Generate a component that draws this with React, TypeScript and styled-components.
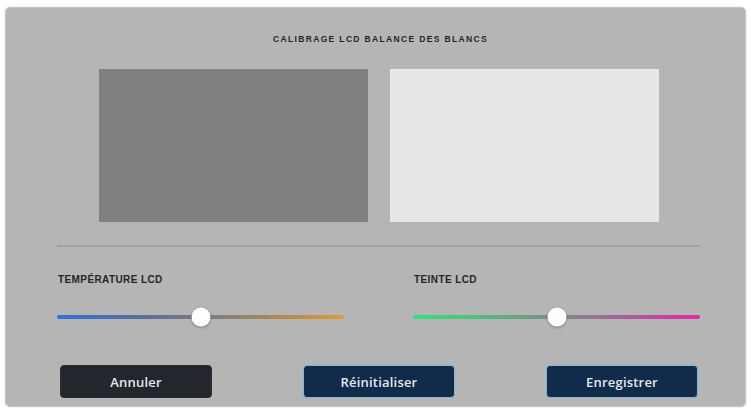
import React from 'react';
import styled, { createGlobalStyle } from 'styled-components';

const GlobalStyle = createGlobalStyle`
  html, body {
    margin: 0;
    padding: 0;
    background: #ffffff;
  }
  body {
    font-family: "Open Sans", "Liberation Sans", sans-serif;
  }
`;

const Page = styled.div`
  width: 751px;
  height: 412px;
  padding: 7px 5px 5px 5px;
  box-sizing: border-box;
`;

const Panel = styled.div`
  width: 741px;
  height: 400px;
  box-sizing: border-box;
  background: #b5b5b5;
  border: 1px solid #c4c4c4;
  border-radius: 5px;
  box-shadow: 0 0 2px rgba(0, 0, 0, 0.15);
  padding: 26px 45px 0 51px;
  display: flex;
  flex-direction: column;
`;

const Title = styled.div`
  font-family: "Liberation Sans", sans-serif;
  font-weight: 700;
  font-size: 8.5px;
  line-height: 11px;
  letter-spacing: 1.35px;
  color: #262626;
  text-align: center;
  padding-left: 4px;
`;

const Swatches = styled.div`
  display: flex;
  justify-content: center;
  gap: 22px;
  margin-top: 24px;
`;

const Swatch = styled.div<{ tone: string }>`
  width: 269px;
  height: 153px;
  background: ${p => p.tone};
`;

const Divider = styled.div`
  height: 2px;
  background: #a2a2a2;
  margin-top: 23px;
`;

const Controls = styled.div`
  display: grid;
  grid-template-columns: 287px 287px;
  justify-content: space-between;
  margin-top: 27px;
`;

const Control = styled.div`
  display: flex;
  flex-direction: column;
`;

const Label = styled.div`
  font-family: "Liberation Sans", sans-serif;
  font-weight: 700;
  font-size: 10px;
  line-height: 12px;
  letter-spacing: 0.4px;
  color: #262626;
  padding-left: 1px;
`;

const SliderBox = styled.div`
  position: relative;
  height: 20px;
  margin-top: 21px;
  display: flex;
  align-items: center;
`;

const Track = styled.div<{ gradient: string }>`
  width: 100%;
  height: 4px;
  border-radius: 2px;
  background: ${p => p.gradient};
`;

const Thumb = styled.div`
  position: absolute;
  top: 50%;
  width: 19px;
  height: 19px;
  border-radius: 50%;
  background: #ffffff;
  transform: translate(-50%, -50%);
  box-shadow: 0 1px 3px rgba(0, 0, 0, 0.3);
`;

const Buttons = styled.div`
  display: flex;
  justify-content: space-between;
  padding: 0 2px 0 3px;
  margin-top: 38px;
`;

const Button = styled.button<{ primary?: boolean }>`
  width: 152px;
  height: 33px;
  box-sizing: border-box;
  border-radius: 4px;
  border: 1px solid ${p => (p.primary ? '#8fb2cf' : '#2a2c33')};
  background: ${p => (p.primary ? '#112b4a' : '#24262e')};
  color: #e6e8ee;
  font-family: "Open Sans", sans-serif;
  font-weight: 600;
  font-size: 13px;
  letter-spacing: 0.2px;
  box-shadow: ${p => (p.primary ? '0 0 2px rgba(150, 190, 220, 0.6)' : 'none')};
  cursor: pointer;
`;

type Slider = {
  label: string;
  value: number;
  gradient: string;
};

const sliders: Slider[] = [
  {
    label: 'TEMPÉRATURE LCD',
    value: 50,
    gradient: 'linear-gradient(90deg, #3570d8 0%, #5a6e98 30%, #7c7c84 50%, #8c8076 62%, #b88c4c 82%, #dc9c34 100%)',
  },
  {
    label: 'TEINTE LCD',
    value: 50,
    gradient: 'linear-gradient(90deg, #36e07a 0%, #5ab480 28%, #7f8a84 50%, #8e7a8e 62%, #bc4c9e 82%, #e22aa4 100%)',
  },
];

export default function App() {
  return (
    <>
      <GlobalStyle />
      <Page>
        <Panel>
          <Title>CALIBRAGE LCD BALANCE DES BLANCS</Title>
          <Swatches>
            <Swatch tone="#808080" />
            <Swatch tone="#e7e7e7" />
          </Swatches>
          <Divider />
          <Controls>
            {sliders.map(s => (
              <Control key={s.label}>
                <Label>{s.label}</Label>
                <SliderBox>
                  <Track gradient={s.gradient} />
                  <Thumb style={{ left: `${s.value}%` }} />
                </SliderBox>
              </Control>
            ))}
          </Controls>
          <Buttons>
            <Button>Annuler</Button>
            <Button primary>Réinitialiser</Button>
            <Button primary>Enregistrer</Button>
          </Buttons>
        </Panel>
      </Page>
    </>
  );
}
